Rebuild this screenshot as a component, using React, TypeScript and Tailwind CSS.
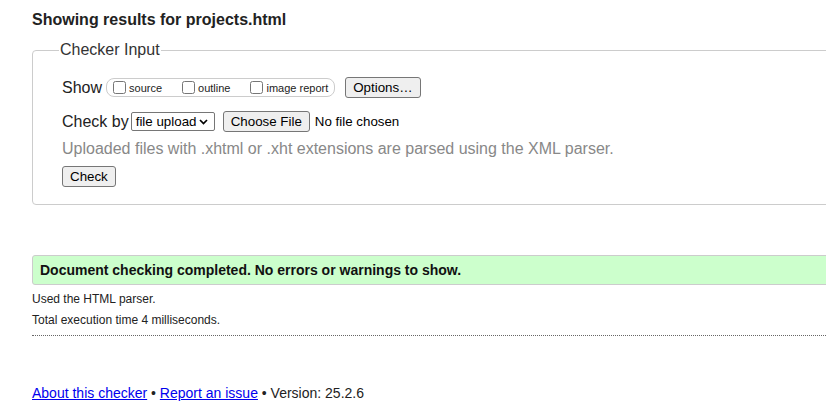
import React from "react";

function Btn({ children, className = "" }: { children: React.ReactNode; className?: string }) {
  return (
    <button
      type="button"
      className={
        "flex items-center justify-center h-[21px] px-[7px] bg-[#efefef] border border-[#767676] rounded-[3px] text-[13.33px] leading-[16px] text-black " +
        className
      }
    >
      {children}
    </button>
  );
}

function Opt({ label, last = false }: { label: string; last?: boolean }) {
  return (
    <label className={"flex items-center " + (last ? "" : "mr-[20px]")}>
      <input type="checkbox" className="m-0 w-[13px] h-[13px]" />
      <span className="ml-[3px] text-[11px] leading-[13px] mt-[2px]">{label}</span>
    </label>
  );
}

export default function App() {
  return (
    <div className="w-[826px] h-[418px] overflow-hidden bg-white text-[#222] font-['Liberation_Sans',Arial,sans-serif]">
      <div className="ml-[32px] w-[880px]">
        <h2 className="pt-[11px] text-[16px] leading-[18px] font-bold text-[#222]">
          Showing results for projects.html
        </h2>
        <fieldset className="mt-[12px] border border-[#ccc] rounded-[4px] pl-[29px] pt-[18px] pb-[17px]">
          <legend className="-ml-[3px] px-[1px] text-[16px] leading-[18px] text-[#333]">Checker Input</legend>
          <div className="flex items-center h-[21px]">
            <span className="text-[16px] leading-[18px]">Show</span>
            <div className="ml-[4px] flex items-center h-[19px] border border-[#ccc] rounded-[8px] pl-[6px] pr-[6px]">
              <Opt label="source" />
              <Opt label="outline" />
              <Opt label="image report" last />
            </div>
            <Btn className="ml-[10px]">Options…</Btn>
          </div>
          <div className="mt-[13px] flex items-center h-[21px]">
            <span className="text-[16px] leading-[18px]">Check by</span>
            <div className="ml-[2px] flex items-center justify-between h-[19px] w-[84px] border border-[#767676] rounded-[2px] pl-[4px] pr-[6px] text-[13.33px] leading-[16px] text-black">
              <span>file upload</span>
              <svg width="9" height="6" viewBox="0 0 9 6" fill="none">
                <path d="M1 1l3.5 3.5L8 1" stroke="#000" strokeWidth="1.7" />
              </svg>
            </div>
            <Btn className="ml-[8px]">Choose File</Btn>
            <span className="ml-[5px] text-[13.33px] leading-[16px] text-black">No file chosen</span>
          </div>
          <p className="mt-[8px] text-[16px] leading-[18px] text-[#888]">
            Uploaded files with .xhtml or .xht extensions are parsed using the XML parser.
          </p>
          <div className="mt-[8px] flex">
            <Btn className="px-[6px]">Check</Btn>
          </div>
        </fieldset>
        <div className="mt-[50px] h-[30px] flex items-center border border-[#ccc] rounded-[3px] bg-[#ccffcc] pl-[7px]">
          <span className="font-bold text-[14px] leading-[18px] text-[#111]">
            Document checking completed. No errors or warnings to show.
          </span>
        </div>
        <p className="mt-[7px] text-[12px] leading-[14px]">Used the HTML parser.</p>
        <p className="mt-[7px] text-[12px] leading-[14px]">Total execution time 4 milliseconds.</p>
        <div className="mt-[8px] border-t border-dotted border-[#666]" />
        <p className="mt-[49px] text-[14px] leading-[16px]">
          <a href="#" className="text-[#0000ee] underline">About this checker</a>
          {" • "}
          <a href="#" className="text-[#0000ee] underline">Report an issue</a>
          {" • Version: 25.2.6"}
        </p>
      </div>
    </div>
  );
}
